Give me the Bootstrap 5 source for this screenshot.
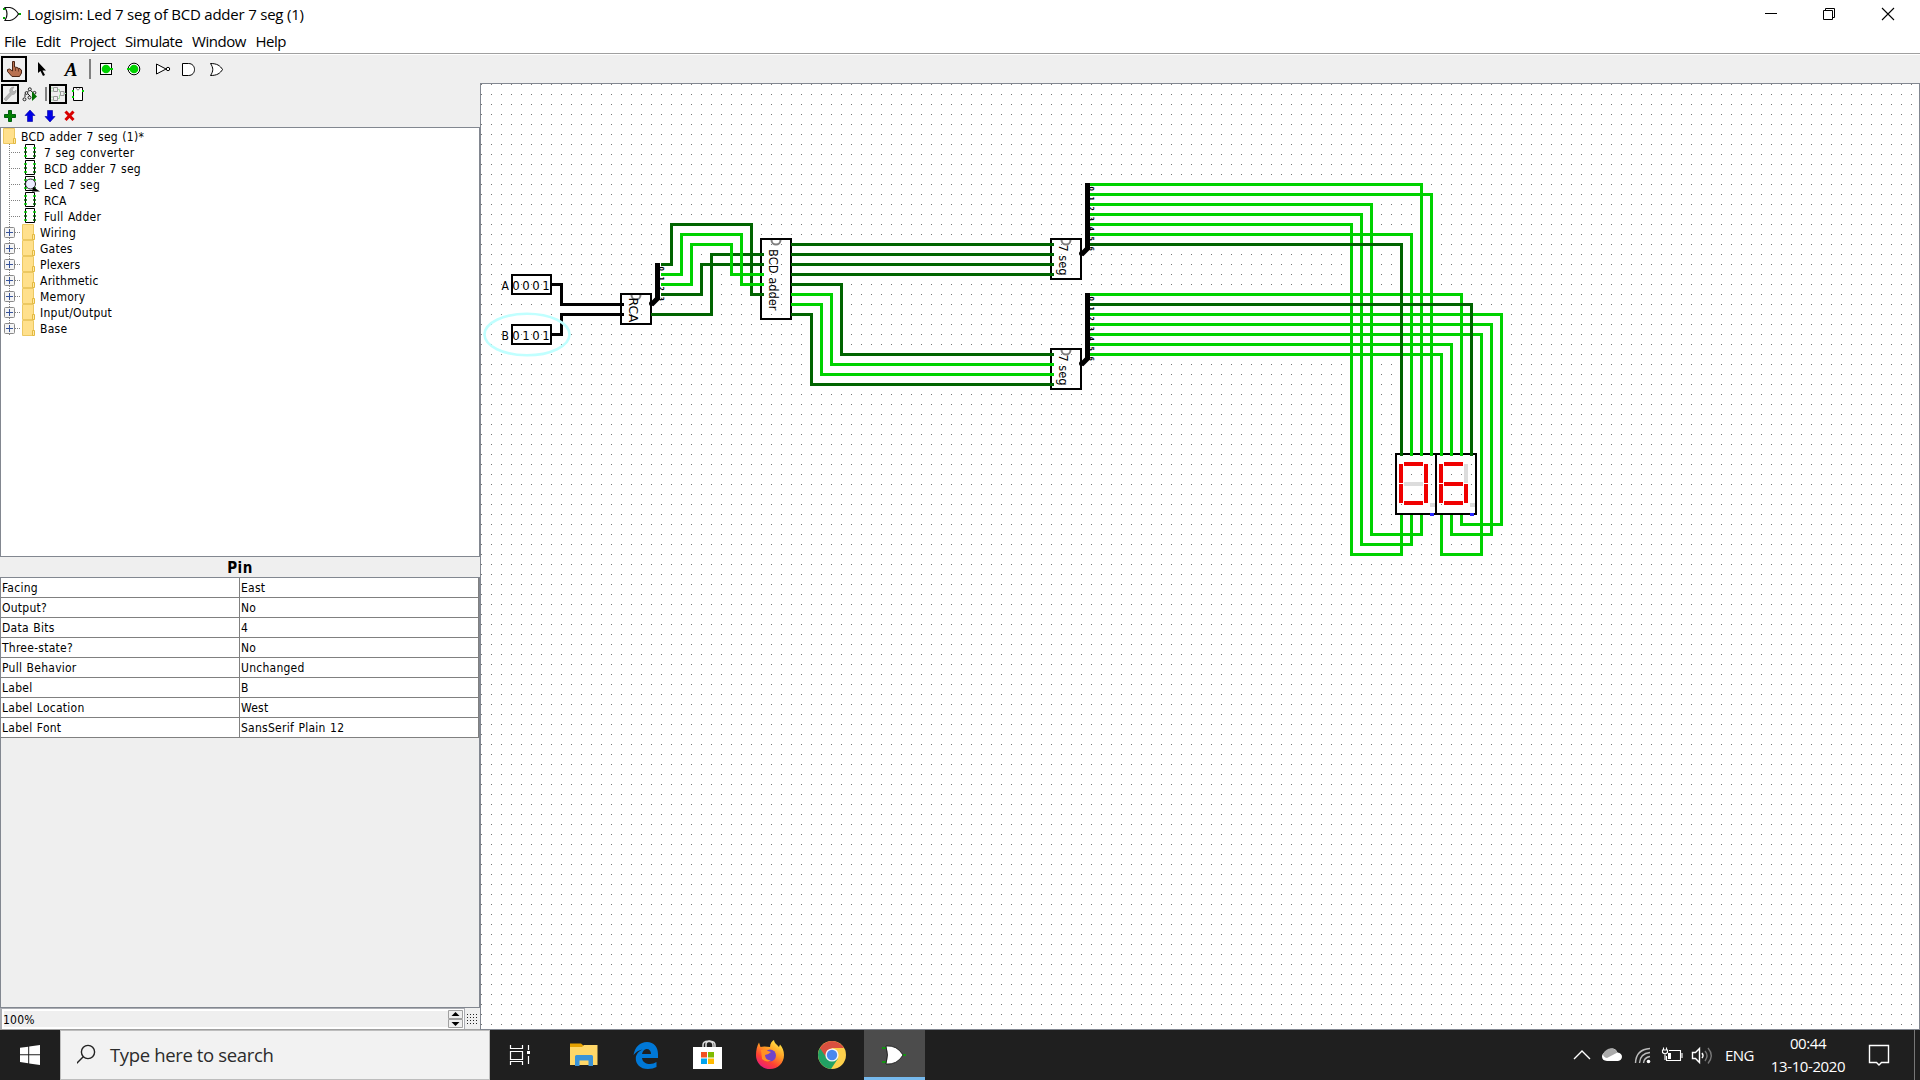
<!DOCTYPE html>
<html lang="en">
<head>
<meta charset="utf-8">
<title>Logisim: Led 7 seg of BCD adder 7 seg (1)</title>
<link rel="stylesheet" href="https://cdn.jsdelivr.net/npm/bootstrap@5.3.0/dist/css/bootstrap.min.css">
<script src="https://cdn.jsdelivr.net/npm/bootstrap@5.3.0/dist/js/bootstrap.bundle.min.js"></script>
<style>
  html, body { height: 100%; }
  body { width: 1920px; height: 1080px; overflow: hidden; background: #fff; color: #000; font-family: "Open Sans", "Noto Sans", sans-serif; line-height: 1; }
  svg { display: block; flex: none; }
  .titlebar { height: 30px; font-size: 15px; }
  .titlebar .caption { letter-spacing: -.21px; padding: 0 0 2px 5px; }
  .menus { height: 23px; font-size: 15px; padding-left: 4px; gap: 9.5px; letter-spacing: -.45px; }
  .tools { height: 30px; background: #efefef; border-top: 1px solid #a0a0a0; box-shadow: inset 0 1px #fff; padding-top: 1px; }
  .explorer { width: 480px; background: #efefef; font-family: "DejaVu Sans Condensed", "DejaVu Sans", sans-serif; font-stretch: condensed; font-size: 12px; letter-spacing: .25px; word-spacing: .8px; }
  .subtools { height: 21px; }
  .edittools { height: 23px; }
  .tree { height: 430px; background: #fff; border: 1px solid #828790; }
  .tree li { height: 16px; line-height: 18px; white-space: pre; }
  .attr-title { height: 20px; font: bold 15px "DejaVu Sans Condensed", "DejaVu Sans", sans-serif; font-stretch: condensed; padding-top: 2px; letter-spacing: .5px; }
  .attrs { border: 1px solid #828790; height: 431px; }
  .attr-line { height: 20px; background: #fff; border-bottom: 1px solid #808080; }
  .attr-line > div { padding-left: 1px; height: 19px; line-height: 21px; }
  .attr-line > .attr-name { width: 239px; border-right: 1px solid #808080; }
  .attr-line > .attr-val { border-right: 1px solid #808080; }
  .zoombar { height: 22px; border-bottom: 1px solid #a0a0a0; }
  .zoomfield { width: 465px; border: 2px solid #abadb3; border-width: 1px 1px 0 2px; padding-left: 1px; box-shadow: inset 0 0 0 2px #fff; }
  .zoomfield span { padding-top: 2px; }
  .canvas { border: 1px solid #828790; background: #fff; }
  .wires { fill: none; stroke-width: 3; stroke-linejoin: miter; shape-rendering: crispEdges; }
  .on { stroke: #00d200; } .off { stroke: #006400; } .bus { stroke: #000; }
  .outline { fill: none; stroke: #000; stroke-width: 2; shape-rendering: crispEdges; }
  .chiptext text { font-family: "DejaVu Sans Condensed", "DejaVu Sans", sans-serif; font-stretch: condensed; font-size: 12px; }
  .chiptext .bits { font-size: 13px; }
  .chiptext .tiny { font-size: 7px; font-weight: bold; }
  .taskbar { height: 50px; background: #1f1f1f; color: #fff; }
  .start { width: 60px; }
  .searchbox { width: 430px; background: #f2f2f2; border: 1px solid #bdbdbd; color: #2b2b2b; font-size: 18.5px; letter-spacing: -.36px; }
  .app { width: 62px; height: 50px; }
  .app-first { width: 63px; }
  .app-active { background: #4c4c4c; border-bottom: 3px solid #76b9ed; width: 61px; margin-left: 1px; }
  .lang { width: 32px; font-size: 15px; letter-spacing: -.6px; margin-right: 6px; }
  .clock { width: 90px; font-size: 15px; line-height: 23px; letter-spacing: -.4px; }
</style>
</head>
<body class="d-flex flex-column">
<svg width="0" height="0" class="position-absolute">
  <symbol id="circuit" viewBox="0 0 44 16">
    <path d="M9.500 0V16M11 8.500H20" stroke="#808080" stroke-dasharray="1 1"/>
    <path d="M25.500 .5H34.500V14.500H25.500Z" fill="#fff" stroke="#000"/>
    <path d="M24 4H27M24 12H27M33 4H36" stroke="#00d200" stroke-width="1.500"/>
    <path d="M24 8H27M33 8H36M33 12H36" stroke="#006400" stroke-width="1.500"/>
  </symbol>
  <symbol id="library" viewBox="0 0 40 16">
    <path d="M9.500 0V16M15 8.500H20" stroke="#808080" stroke-dasharray="1 1"/>
    <rect x="4.500" y="3.500" width="10" height="10" rx="1" fill="#f4f4f4" stroke="#8a8a8a"/>
    <path d="M6 8.500H13M9.500 5V12" stroke="#35539c"/>
    <use href="#folder" x="22"/>
  </symbol>
  <g id="folder"><path d="M.5 .5H11.500V15.500H.5Z" fill="#ffe08c" stroke="#ecc862"/><path d="M10.500 10.500H12.500V15.500H10.500Z" fill="#ffe9a8" stroke="#e3b93f"/></g>
</svg>

<header>
  <div class="titlebar d-flex align-items-center">
    <svg width="22" height="30" viewBox="0 0 22 30"><path d="M3 9H5M3 18H5M18 14H21" stroke="#00a800" stroke-width="2"/><path d="M5 7.500H10Q15 8.500 18.500 14Q15 19.500 10 20.500H5Q9 14 5 7.500Z" fill="#fff" stroke="#111" stroke-width="1.200"/></svg>
    <span class="caption">Logisim: Led 7 seg of BCD adder 7 seg (1)</span>
    <svg class="ms-auto" width="180" height="30" viewBox="1740 0 180 30" fill="none" stroke="#000"><path d="M1765 13.500H1777"/><path d="M1823.500 10.500H1832.500V19.500H1823.500ZM1825.500 10V8.500H1834.500V17.500H1833"/><path d="M1882 8L1894 20M1894 8L1882 20" stroke-width="1.100"/></svg>
  </div>
  <nav class="menus d-flex align-items-start pt-1"><span>File</span><span>Edit</span><span>Project</span><span>Simulate</span><span>Window</span><span>Help</span></nav>
  <div class="tools d-flex">
    <svg width="232" height="28" viewBox="0 55 232 28">
      <rect x="2" y="57" width="24" height="24" fill="none" stroke="#000" stroke-width="2"/>
      <path d="M12.500 61.500H14.500V67L17.500 67.500V68.200L20 68.500V69.200L21.500 70V73L19.500 76.500H12L7.500 71.500V69.500L9.500 69L12.500 71Z" fill="#b8704f" stroke="#4a2414"/><path d="M15.500 68V71M18.500 69V71.500" stroke="#4a2414" stroke-width=".7"/>
      <path d="M38 62V73L40.500 71L43 76L45 75L42.500 70.500H46Z"/>
      <text x="64.800" y="75.500" font-family="Liberation Serif, serif" font-size="19" font-weight="bold" font-style="italic">A</text>
      <path d="M90 59V79" stroke="#808080" stroke-width="2"/>
      <rect x="100.500" y="63.500" width="11" height="11" fill="#fff" stroke="#000"/><circle cx="106" cy="69" r="4.300" fill="#00d200"/><path d="M109 69H113" stroke="#00d200" stroke-width="2"/>
      <circle cx="134" cy="69" r="5.800" fill="#fff" stroke="#000"/><circle cx="134" cy="69" r="4.300" fill="#00d200"/><path d="M127 69H131" stroke="#00d200" stroke-width="2"/>
      <path d="M156.500 64V74L166 69Z" fill="#fff" stroke="#000"/><circle cx="168" cy="69" r="1.700" fill="#fff" stroke="#000"/>
      <path d="M182.500 63.500H188.500C196.500 63.500 196.500 75.500 188.500 75.500H182.500Z" fill="#fff" stroke="#000"/>
      <path d="M210.500 63.500C217 63.500 220 65.500 222.500 69.500C220 73.500 217 75.500 210.500 75.500C213.500 71 213.500 68 210.500 63.500Z" fill="#fff" stroke="#000"/>
    </svg>
  </div>
</header>

<main class="d-flex flex-fill" style="min-height:0">
  <aside class="explorer d-flex flex-column">
    <div class="subtools d-flex">
      <svg width="100" height="21" viewBox="0 83 100 21">
        <rect x="2" y="85" width="16" height="18" fill="none" stroke="#000" stroke-width="2"/>
        <path d="M4 99L10 92.500C9 89 11 87 14 87L12 90L14 92L16 90C16.500 93 14 95 12 94.500L6 101Z" fill="#b4b4b4" stroke="#999" stroke-width=".6"/>
        <g fill="none" stroke="#222"><path d="M25 97V94.500L29 90.500M30.500 90.500L34 93.500M28 94L30 96"/><circle cx="29.800" cy="89.300" r="1.500" fill="#efefef"/><circle cx="26.500" cy="93" r="1.400" fill="#efefef"/><circle cx="24.500" cy="99.300" r="1.500" fill="#efefef"/><circle cx="29.500" cy="97.500" r="1.500" fill="#efefef"/><circle cx="34.500" cy="92.800" r="1.400" fill="#efefef"/></g><path d="M32 91.500L37 96.500L32 101Z" fill="#007000"/>
        <path d="M46 87V101" stroke="#808080" stroke-width="2"/>
        <rect x="50" y="85" width="16" height="18" fill="none" stroke="#000" stroke-width="2"/>
        <path d="M51 88H53M51 91H53M57 89.500H59.500V92H61M57 98.500H59.500V95H61M51 97H53M51 100H53M64 93.500H66" fill="none" stroke="#9fdc9f"/><path d="M53.500 87.500H57.500V91.500H53.500ZM60.500 91.500H64V95.500H60.500ZM53.500 96.500H57.500V100.500H53.500Z" fill="none" stroke="#999"/>
        <path d="M73.500 87.500H82.500V100.500H73.500Z" fill="#fff" stroke="#000"/><path d="M76 88Q78 92 80 88" fill="none" stroke="#888"/><path d="M72 91H74M72 97H74M82 91H84" stroke="#00d200" stroke-width="2"/>
      </svg>
    </div>
    <div class="edittools d-flex">
      <svg width="90" height="23" viewBox="0 104 90 23">
        <path d="M4.500 114.500H8.500V110.500H11.500V114.500H15.500V117.500H11.500V121.500H8.500V117.500H4.500Z" fill="#008000" stroke="#005f10"/>
        <path d="M30 110L35 115.500H32.500V121.500H27.500V115.500H25Z" fill="#0000e8" stroke="#0000a0" stroke-width=".6"/>
        <path d="M50 122L55 116.500H52.500V110.500H47.500V116.500H45Z" fill="#0000e8" stroke="#0000a0" stroke-width=".6"/>
        <path d="M65.500 111.500L73.500 120M73.500 111.500L65.500 120" stroke="#d80000" stroke-width="3"/>
      </svg>
    </div>
    <ul class="tree list-unstyled m-0">
      <li class="d-flex align-items-start"><svg width="20" height="16" viewBox="1 0 20 16"><use href="#folder" x="3"/></svg>BCD adder 7 seg (1)*</li>
      <li class="d-flex align-items-start"><svg width="43" height="16" viewBox="1 0 43 16"><use href="#circuit" width="44" height="16"/></svg>7 seg converter</li>
      <li class="d-flex align-items-start"><svg width="43" height="16" viewBox="1 0 43 16"><use href="#circuit" width="44" height="16"/></svg>BCD adder 7 seg</li>
      <li class="d-flex align-items-start"><svg width="43" height="16" viewBox="1 0 43 16"><use href="#circuit" width="44" height="16"/><circle cx="30.500" cy="8" r="5" fill="#ececff" stroke="#222"/><path d="M33 11L40 15.500H32Z"/></svg>Led 7 seg</li>
      <li class="d-flex align-items-start"><svg width="43" height="16" viewBox="1 0 43 16"><use href="#circuit" width="44" height="16"/></svg>RCA</li>
      <li class="d-flex align-items-start"><svg width="43" height="16" viewBox="1 0 43 16"><use href="#circuit" width="44" height="16"/></svg>Full Adder</li>
      <li class="d-flex align-items-start"><svg width="39" height="16" viewBox="1 0 39 16"><use href="#library" width="40" height="16"/></svg>Wiring</li>
      <li class="d-flex align-items-start"><svg width="39" height="16" viewBox="1 0 39 16"><use href="#library" width="40" height="16"/></svg>Gates</li>
      <li class="d-flex align-items-start"><svg width="39" height="16" viewBox="1 0 39 16"><use href="#library" width="40" height="16"/></svg>Plexers</li>
      <li class="d-flex align-items-start"><svg width="39" height="16" viewBox="1 0 39 16"><use href="#library" width="40" height="16"/></svg>Arithmetic</li>
      <li class="d-flex align-items-start"><svg width="39" height="16" viewBox="1 0 39 16"><use href="#library" width="40" height="16"/></svg>Memory</li>
      <li class="d-flex align-items-start"><svg width="39" height="16" viewBox="1 0 39 16"><use href="#library" width="40" height="16"/></svg>Input/Output</li>
      <li class="d-flex align-items-start"><svg width="39" height="16" viewBox="1 0 39 16"><use href="#library" width="40" height="16"/></svg>Base</li>
    </ul>
    <div class="attr-title d-flex align-items-center justify-content-center">Pin</div>
    <div class="attrs">
      <div class="attr-line d-flex"><div class="attr-name">Facing</div><div class="attr-val flex-fill">East</div></div>
      <div class="attr-line d-flex"><div class="attr-name">Output?</div><div class="attr-val flex-fill">No</div></div>
      <div class="attr-line d-flex"><div class="attr-name">Data Bits</div><div class="attr-val flex-fill">4</div></div>
      <div class="attr-line d-flex"><div class="attr-name">Three-state?</div><div class="attr-val flex-fill">No</div></div>
      <div class="attr-line d-flex"><div class="attr-name">Pull Behavior</div><div class="attr-val flex-fill">Unchanged</div></div>
      <div class="attr-line d-flex"><div class="attr-name">Label</div><div class="attr-val flex-fill">B</div></div>
      <div class="attr-line d-flex"><div class="attr-name">Label Location</div><div class="attr-val flex-fill">West</div></div>
      <div class="attr-line d-flex"><div class="attr-name">Label Font</div><div class="attr-val flex-fill">SansSerif Plain 12</div></div>
    </div>
    <div class="zoombar d-flex">
      <div class="zoomfield d-flex align-items-center justify-content-between"><span>100%</span>
        <svg width="16" height="20" viewBox="448 1009 16 20"><path d="M448.500 1010.500H462.500V1018.500H448.500ZM448.500 1019.500H462.500V1027.500H448.500Z" fill="#efefef" stroke="#a0a0a0"/><path d="M451.500 1016H459.500L455.500 1012ZM451.500 1022H459.500L455.500 1026Z"/></svg>
      </div>
      <svg width="15" height="21" viewBox="465 1008 15 21"><path d="M467 1014.500H478M467 1017.500H478M467 1020.500H478M467 1023.500H478" stroke="#222" stroke-dasharray="1 2"/></svg>
    </div>
  </aside>

  <section class="canvas flex-fill">
    <svg width="1438" height="945" viewBox="480.500 83.500 1438 945">
      <defs><pattern id="dots" patternUnits="userSpaceOnUse" x="480.500" y="83.500" width="10" height="10"><rect width="1" height="1" fill="#777"/></pattern></defs>
      <rect x="480.500" y="83.500" width="1438" height="945" fill="url(#dots)"/>

      <g class="outline">
        <rect x="511.500" y="274.500" width="39" height="19"/><rect x="511.500" y="324.500" width="39" height="19"/>
        <rect x="620.500" y="293.500" width="30" height="30"/>
        <rect x="760.500" y="238.500" width="30" height="80"/>
        <rect x="1050.500" y="238.500" width="30" height="40"/><rect x="1050.500" y="348.500" width="30" height="40"/>
        <rect x="1395.500" y="453.500" width="40" height="60"/><rect x="1435.500" y="453.500" width="40" height="60"/>
      </g>
      <g fill="none" stroke="#808080" stroke-width="2">
        <path d="M631 294.500A4.500 4.500 0 0 0 640 294.500"/><path d="M771 239.500A4.500 4.500 0 0 0 780 239.500"/>
        <path d="M1061 239.500A4.500 4.500 0 0 0 1070 239.500"/><path d="M1061 349.500A4.500 4.500 0 0 0 1070 349.500"/>
      </g>

      <g class="wires">
        <g class="bus"><path d="M551 284H561V304H623.500M551 334H561V314H623.500"/></g>
        <!-- RCA to BCD adder -->
        <path class="off" d="M660 264H671V224H751V294H763.500M660 294H701V264H763.500M650 314H711V254H763.500"/>
        <path class="on" d="M660 274H681V234H741V284H763.500M660 284H691V244H731V274H763.500"/>
        <!-- BCD adder to segment converters -->
        <path class="off" d="M790 244H1053.500M790 254H1053.500M790 264H1053.500M790 274H1053.500M790 284H841V354H1053.500M790 314H811V384H1053.500"/>
        <path class="on" d="M790 294H831V364H1053.500M790 304H821V374H1053.500"/>
        <!-- converters to the displays -->
        <path class="on" d="M1089 184H1421V455M1089 194H1431V455M1089 204H1371V534H1421V514M1089 214H1361V544H1411V514M1089 224H1351V554H1401V514M1089 234H1411V455"/>
        <path class="on" d="M1089 294H1461V455M1089 314H1501V524H1461V514M1089 324H1491V534H1451V514M1089 334H1481V554H1441V514M1089 344H1451V455M1089 354H1441V455"/>
        <path class="off" d="M1089 244H1401V455M1089 304H1471V455"/>
        <path stroke="#2828ff" d="M1429 514H1433M1469 514H1473"/>
      </g>
      <g fill="none" stroke="#000" stroke-width="5">
        <path d="M651 304L657 298V262.500"/><path d="M1081 254L1087 248V182.500"/><path d="M1081 364L1087 358V292.500"/>
      </g>
      <circle cx="651" cy="303" r="2.500"/><circle cx="1081" cy="253" r="2.500"/><circle cx="1081" cy="363" r="2.500"/>

      <g id="digits" shape-rendering="crispEdges" fill="#f00000" transform="translate(-.5 -.5)">
        <path d="M1404 462H1423V466H1404ZM1399 464H1403V483H1399ZM1399 484H1403V503H1399ZM1424 464H1428V483H1424ZM1424 484H1428V503H1424ZM1404 501H1423V505H1404Z"/>
        <path d="M1444 462H1463V466H1444ZM1439 464H1443V483H1439ZM1439 484H1443V503H1439ZM1464 484H1468V503H1464ZM1444 482H1463V486H1444ZM1444 501H1463V505H1444Z"/>
        <path fill="#dcdcdc" d="M1404 482H1423V486H1404ZM1430 503H1435V507H1430ZM1464 464H1468V483H1464ZM1470 503H1475V507H1470Z"/>
      </g>

      <ellipse cx="526.500" cy="334" rx="42.500" ry="20.800" fill="none" stroke="#c0ffff" stroke-width="2.600"/>

      <g class="chiptext">
        <text x="501" y="289.500">A</text><text x="501" y="339.500">B</text>
        <text class="bits" text-anchor="middle" y="289"><tspan x="515.500">0</tspan><tspan x="525.500">0</tspan><tspan x="535.500">0</tspan><tspan x="545.500">1</tspan></text>
        <text class="bits" text-anchor="middle" y="339"><tspan x="515.500">0</tspan><tspan x="525.500">1</tspan><tspan x="535.500">0</tspan><tspan x="545.500">1</tspan></text>
        <text transform="translate(628 297) rotate(90)" textLength="25" lengthAdjust="spacingAndGlyphs">RCA</text>
        <text transform="translate(768 248.500) rotate(90)" textLength="61.500" lengthAdjust="spacingAndGlyphs">BCD adder</text>
        <text transform="translate(1058.500 244) rotate(90)" textLength="31" lengthAdjust="spacingAndGlyphs">7 seg</text>
        <text transform="translate(1058.500 354) rotate(90)" textLength="31" lengthAdjust="spacingAndGlyphs">7 seg</text>
        <text class="tiny" transform="translate(658.500 266) rotate(90)" x="0 10 20 30">0123</text>
        <text class="tiny" transform="translate(1088.500 186) rotate(90)" x="0 10 20 30 40 50 60">0123456</text>
        <text class="tiny" transform="translate(1088.500 296) rotate(90)" x="0 10 20 30 40 50 60">0123456</text>
      </g>
    </svg>
  </section>
</main>

<footer class="taskbar d-flex align-items-center">
  <div class="start d-flex justify-content-center"><svg width="20" height="20" viewBox="0 0 20 20" fill="#fff"><path d="M0 2.800L8.200 1.700V9.300H0ZM9.200 1.500L20 0V9.300H9.200ZM0 10.300H8.200V18.200L0 17.100ZM9.200 10.300H20V20L9.200 18.400Z"/></svg></div>
  <div class="searchbox d-flex align-items-center h-100">
    <svg class="ms-3" width="33" height="24" viewBox="77 1043 33 24" fill="none" stroke="#222" stroke-width="1.400"><circle cx="88" cy="1052" r="6.600"/><path d="M83.500 1056.500L75.500 1064.500"/></svg>
    <span>Type here to search</span>
  </div>
  <div class="app app-first d-flex align-items-center ps-1"><svg width="58" height="50" viewBox="494 1030 58 50" fill="none" stroke="#fff" stroke-width="1.200"><path d="M510.500 1045V1048.500H522.500V1045M510.500 1051.500H522.500V1059.500H510.500ZM510.500 1065V1061.500H522.500V1065M528.500 1045V1050M528.500 1056V1064"/><path d="M527 1051H530V1054H527Z" fill="#fff" stroke="none"/></svg></div>
  <div class="app"><svg width="62" height="50" viewBox="553 1030 62 50"><path d="M570 1043.500H581L584 1046H597V1065H570Z" fill="#e5a100"/><path d="M570 1047H582L584 1045H597.500V1065H570Z" fill="#ffd768"/><path d="M575 1056.500Q575 1055 576.500 1055H591.500Q593 1055 593 1056.500V1066H588.500V1060.500H579.500V1066H575Z" fill="#3a93d8"/></svg></div>
  <div class="app"><svg width="62" height="50" viewBox="553 1030 62 50"><path fill="#0078d7" d="M571.500 1055C573 1047 578 1042 585 1042C592 1042 596 1047 596 1054V1058H580C580.500 1062 584 1064 588 1064Q591.500 1064 594.500 1062V1067Q591 1069 586 1069C578 1069 573.500 1064 573.800 1058C574 1054 577 1051 580.500 1049.500C577 1050 574 1052 571.500 1055ZM580 1054H589C589 1051 587.500 1049 584.500 1049Q581 1049.500 580 1054Z"/></svg></div>
  <div class="app"><svg width="62" height="50" viewBox="677 1030 62 50"><path d="M703 1048V1045C703 1040 713 1040 713 1045V1048M706 1047V1044C706 1040 715 1040 715 1045V1048" fill="none" stroke="#ddd" stroke-width="1.500"/><path d="M693 1047H722V1069H693Z" fill="#fff"/><path fill="#f25022" d="M701 1052H707V1057.500H701Z"/><path fill="#7fba00" d="M708 1052H714V1057.500H708Z"/><path fill="#00a4ef" d="M701 1058.500H707V1064H701Z"/><path fill="#ffb900" d="M708 1058.500H714V1064H708Z"/></svg></div>
  <div class="app"><svg width="62" height="50" viewBox="739 1030 62 50"><defs><linearGradient id="fox" x1=".8" y1="0" x2=".2" y2="1"><stop offset="0" stop-color="#fff04a"/><stop offset=".4" stop-color="#ff9a24"/><stop offset=".7" stop-color="#ff4133"/><stop offset="1" stop-color="#e31587"/></linearGradient></defs><path fill="url(#fox)" d="M759 1042.500L760.500 1047L764.500 1046.500L770 1047C770 1043.500 772 1041 774 1040C774.500 1043.500 777 1044.500 779 1047L780 1044.500C782.500 1047 784 1051 784 1055C784 1063 778 1069 770 1069C762 1069 756 1063 756 1055C756 1050 757 1046 759 1042.500Z"/><circle cx="770" cy="1055.500" r="6" fill="#7044ca"/><path d="M761 1050Q765 1048 768 1051L771 1052Q768 1055 765 1055Q765 1060 771 1060.500Q766 1063 762 1059Z" fill="#ff9224"/></svg></div>
  <div class="app"><svg width="62" height="50" viewBox="801 1030 62 50"><circle cx="832" cy="1055" r="14" fill="#fdd04b"/><path d="M819.900 1048A14 14 0 0 0 831 1069L838 1058.500L832 1055Z" fill="#22a263"/><path d="M819.900 1048A14 14 0 0 1 844.100 1048H832L826 1057Z" fill="#d9503f"/><circle cx="832" cy="1055" r="6.600" fill="#f4f4f4"/><circle cx="832" cy="1055" r="5.200" fill="#4a88ee"/></svg></div>
  <div class="app app-active"><svg width="61" height="47" viewBox="864 1030 61 47"><path d="M882 1048H886M882 1062H886M903 1055H906" stroke="#00a800" stroke-width="1.500"/><path d="M886 1046Q897 1045 903 1055Q897 1065 886 1064Q889 1055 886 1046Z" fill="#fff" stroke="#111" stroke-width=".8"/></svg></div>
  <div class="ms-auto d-flex align-items-center">
    <svg width="160" height="50" viewBox="1565 1030 160 50" fill="none" stroke="#fff" stroke-width="1.400">
      <path d="M1574 1059L1582 1051L1590 1059"/>
      <path d="M1607 1061Q1602 1060.500 1602 1056.500Q1602 1053 1606 1052Q1608 1048 1613 1048.500Q1616 1049 1617.500 1052.500Q1622 1053 1622 1057Q1621.500 1060.500 1618 1061Z" fill="#fff" stroke="none"/><path d="M1603 1054Q1606 1048 1612 1048.500Q1616 1049 1617.500 1052.500L1607 1058Q1603 1057 1603 1054Z" fill="#aaa" stroke="none"/>
      <path d="M1635.500 1063Q1636 1049.500 1650 1048.500M1639.500 1063Q1640 1053.500 1650 1052.500M1643.500 1063Q1644 1057.500 1650 1056.500" stroke="#bbb"/><circle cx="1648.500" cy="1061.500" r="1.800" fill="#fff" stroke="none"/>
      <path d="M1669 1050.500H1680.500V1060.500H1666.500V1056M1682 1053V1058M1662.500 1050H1667.500V1052.500Q1665 1055 1662.500 1052.500ZM1663.500 1050V1047.500M1666.500 1050V1047.500M1665 1054.500V1060" stroke-width="1.100"/><path d="M1668 1053H1671V1059H1668Z" fill="#fff" stroke="none"/>
      <path d="M1692.500 1052.500H1695.500L1699.500 1048.500V1062.500L1695.500 1058.500H1692.500Z"/><path d="M1702 1053Q1704 1055.500 1702 1058"/><path d="M1705 1051Q1709 1055.500 1705 1061M1708 1048Q1714.500 1055.500 1708 1063.500" stroke="#777"/>
    </svg>
    <div class="lang">ENG</div>
    <div class="clock text-center">00:44<br>13-10-2020</div>
    <svg width="67" height="50" viewBox="1853 1030 67 50" fill="none" stroke="#fff" stroke-width="1.400"><path d="M1869.500 1045.500H1888.500V1062.500H1881.500L1879 1065L1876.500 1062.500H1869.500Z"/><path d="M1914.500 1030V1080" stroke="#777" stroke-width="1"/></svg>
  </div>
</footer>
</body>
</html>
